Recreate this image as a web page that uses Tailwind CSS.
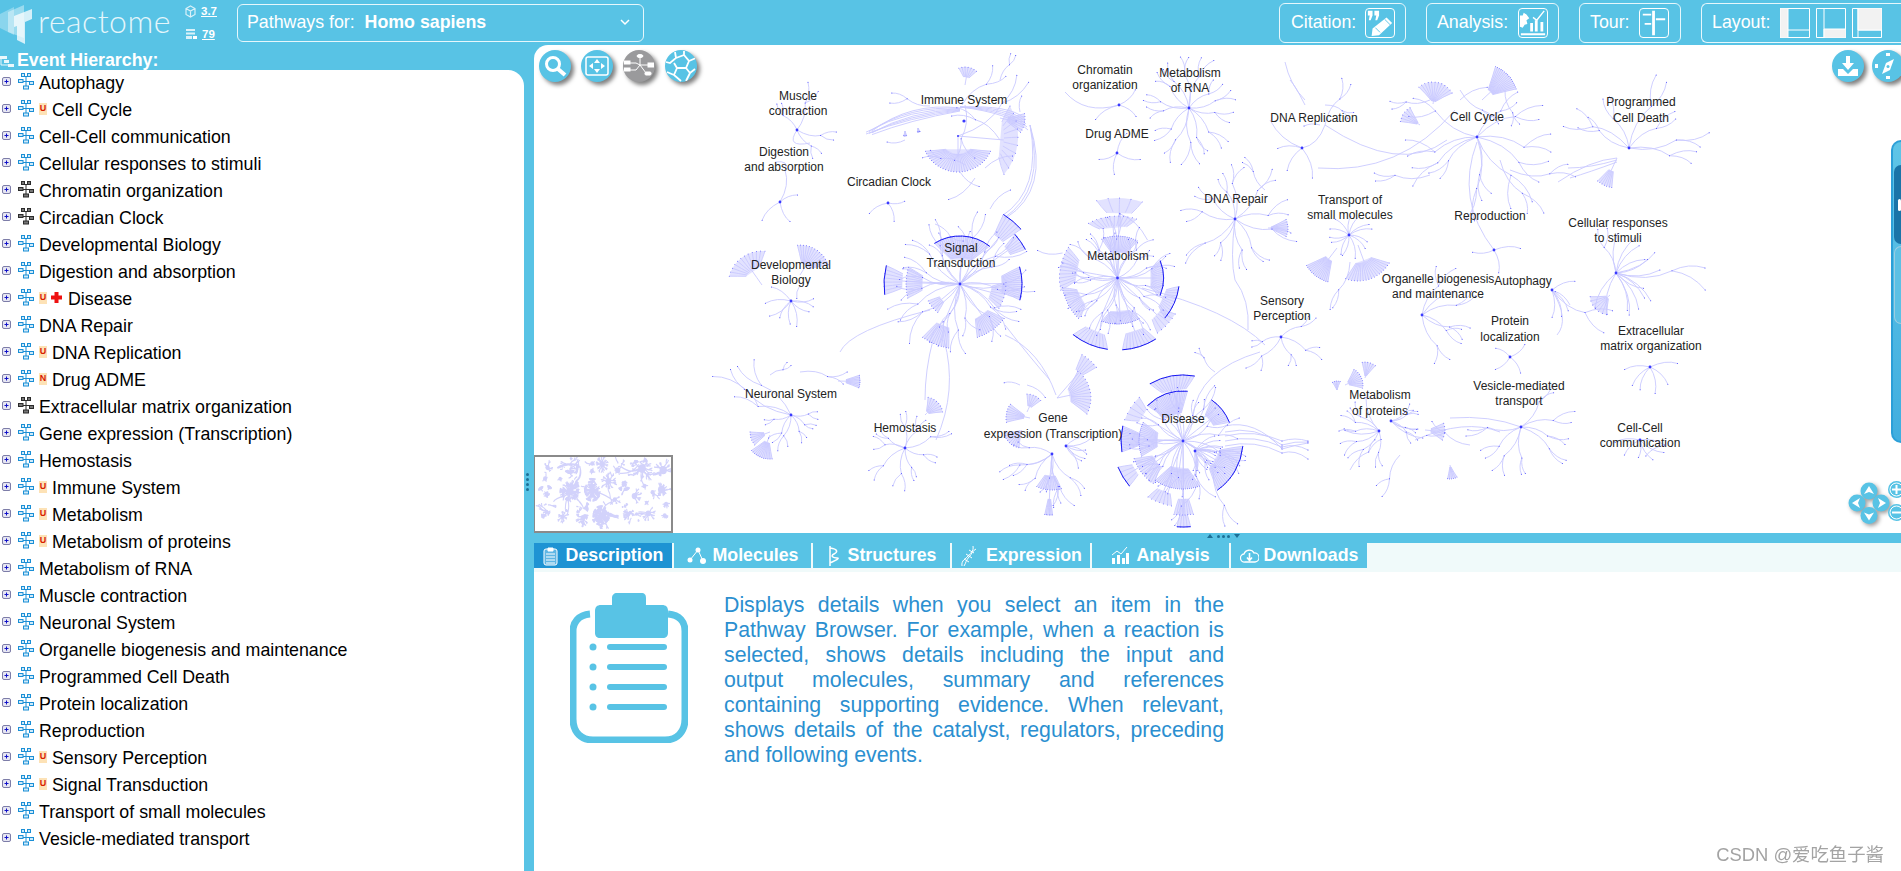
<!DOCTYPE html>
<html lang="en"><head><meta charset="utf-8"><title>Reactome Pathway Browser</title>
<script src="https://cdn.jsdelivr.net/npm/@tailwindcss/browser@4"></script></head>
<body class="h-[871px] w-[1901px] overflow-hidden bg-[#58c3e5] font-['Liberation_Sans',Arial,sans-serif] text-[17.8px]">
<header class="flex h-[45px] items-center text-white">
  <div class="relative flex h-[45px] w-[180px] shrink-0 items-center">
    <svg class="absolute left-0 top-[2px]" width="38" height="42" viewBox="0 0 38 42"><path d="M0 12 L14 5 V33 L0 26Z" fill="#fff" opacity=".3"/><path d="M8 10 L24 3 V36 L8 30Z" fill="#fff" opacity=".4"/><path d="M14 14 L32 7 V17 L25 20 V42 L17 38 V24 L14 25Z" fill="#fff" opacity=".75"/></svg>
    <span class="ml-[38px] mt-[-4px] font-['Lato',sans-serif] text-[32px] font-light tracking-[.5px] text-[#e4f6fb]">reactome</span>
  </div>
  <div class="flex w-[57px] shrink-0 flex-col gap-[7px] text-[11.5px] font-bold leading-[16px]">
    <div class="flex items-center gap-[5px] pl-[5px]"><svg width="11" height="13" viewBox="0 0 11 13" fill="none" stroke="#d9f1f9" stroke-width="1.2"><path d="M5.5 1 L10 3.5 V9.5 L5.5 12 L1 9.5 V3.5Z M1 3.5 L5.5 6 L10 3.5 M5.5 6 V12"/></svg><span class="underline">3.7</span></div>
    <div class="flex items-center gap-[5px] pl-[6px]"><svg width="11" height="12" viewBox="0 0 11 12"><path d="M0 1h9v2H0zM0 4.500h9v2H0zM0 8h6v3H0z" fill="#d9f1f9"/><path d="M7 8h4v3H7z" fill="#fff"/></svg><span class="underline">79</span></div>
  </div>
  <div class="flex h-[38px] w-[407px] shrink-0 items-center justify-between rounded-md border border-[#e6f7fc] pl-[9px] pr-[13px]">
    <span>Pathways for:&nbsp; <b>Homo sapiens</b></span>
    <svg width="10" height="7" viewBox="0 0 10 7" fill="none" stroke="#fff" stroke-width="1.500"><path d="M1 1 L5 5 L9 1"/></svg>
  </div>
  <div class="ml-auto flex h-[40px] items-center gap-[20px]">
    <div class="flex h-[40px] w-[127px] items-center justify-between rounded-md border border-[#e6f7fc] pl-[11px] pr-[10px]"><span>Citation:</span>
      <svg width="30" height="30" viewBox="0 0 30 30" class="rounded-sm border border-white"><path d="M2 2h5v5l-2 5H3l1-5H2zM9 2h5v5l-2 5h-2l1-5H9z" fill="#fff"/><path d="M22 9l6 6-14 13-8 1 1-8z" fill="#fff"/><path d="M10 20l5 5M20 11l6 6" stroke="#58c3e5"/></svg></div>
    <div class="flex h-[40px] w-[133px] items-center justify-between rounded-md border border-[#e6f7fc] pl-[10px] pr-[10px]"><span>Analysis:</span>
      <svg width="30" height="30" viewBox="0 0 30 30" class="rounded-sm border border-white"><path d="M1 7h3l1-3 3 2 3 4-3 2 1 4-3 1-2 3-3-1z" fill="#fff"/><path d="M12 24V15h3v9zM17 24V12h3v12zM23 24V14h3v10zM2 26h26v2H2z" fill="#fff"/><path d="M15 9l4 3 8-10" stroke="#fff" stroke-width="1.500" fill="none"/></svg></div>
    <div class="flex h-[40px] w-[102px] items-center justify-between rounded-md border border-[#e6f7fc] pl-[10px] pr-[11px]"><span>Tour:</span>
      <svg width="30" height="30" viewBox="0 0 30 30" class="rounded-sm border border-white"><path d="M13 2h3v26h-3z" fill="#fff"/><path d="M3 5h9v2H3zM17 10h10v2H17zM5 15h7v2H5z" fill="#fff"/></svg></div>
    <div class="flex h-[40px] w-[200px] shrink-0 items-center gap-[6px] rounded-l-md border border-r-0 border-[#e6f7fc] pl-[10px]"><span class="mr-[4px]">Layout:</span>
      <svg width="30" height="30" viewBox="0 0 30 30" fill="none" stroke="#fff"><path d="M.5.500h29v29H.5z"/><path d="M0 0h8v30H0z" fill="#f2f2f2"/><path d="M8 22h22"/></svg>
      <svg width="30" height="30" viewBox="0 0 30 30" fill="none" stroke="#fff"><path d="M.5.500h29v29H.5zM8 0v30"/><path d="M8 21h22v9H8z" fill="#f2f2f2"/></svg>
      <svg width="30" height="30" viewBox="0 0 30 30" fill="none" stroke="#fff"><path d="M.5.500h29v29H.5zM6 0v30M6 22h24"/><path d="M6 0h24v22H6z" fill="#f2f2f2"/></svg>
    </div>
  </div>
</header>
<div class="flex h-[826px]">
  <aside class="flex w-[524px] shrink-0 flex-col">
    <div class="flex h-[25px] items-end gap-[3px] font-bold leading-[20px] text-white">
      <svg class="mb-[2px]" width="14" height="13" viewBox="0 0 14 13" fill="#eaf8fc"><path d="M0 1h7v3H0zM4 5h5v3H4zM8 9h6v3H8z"/><path d="M1 4v6h7" stroke="#eaf8fc" fill="none"/></svg><span>Event Hierarchy:</span>
    </div>
    <div id="tree" class="flex-1 rounded-tr-[16px] bg-white leading-none text-black"></div>
  </aside>
  <div class="relative w-[10px] shrink-0"><div class="absolute left-[2px] top-[428px] flex flex-col gap-[2px]"><i class="h-[3px] w-[3px] rounded-full bg-[#1c6f96]"></i><i class="h-[3px] w-[3px] rounded-full bg-[#1c6f96]"></i><i class="h-[3px] w-[3px] rounded-full bg-[#1c6f96]"></i><i class="h-[3px] w-[3px] rounded-full bg-[#1c6f96]"></i></div></div>
  <main class="flex min-w-0 flex-1 flex-col">
    <section class="relative h-[488px] shrink-0 overflow-hidden rounded-tl-[14px] bg-white">
      <svg class="absolute left-0 top-0" width="1367" height="488" viewBox="534 45 1367 488" font-family="'Liberation Sans',Arial,sans-serif" font-size="12" fill="#222" text-anchor="middle">
        <g id="graph" fill="none"></g>
        <g>
<text x="798" y="100">Muscle</text><text x="798" y="115">contraction</text>
<text x="784" y="156">Digestion</text><text x="784" y="171">and absorption</text>
<text x="889" y="186">Circadian Clock</text>
<text x="964" y="104">Immune System</text>
<text x="1105" y="74">Chromatin</text><text x="1105" y="89">organization</text>
<text x="1190" y="77">Metabolism</text><text x="1190" y="92">of RNA</text>
<text x="1117" y="138">Drug ADME</text>
<text x="1314" y="122">DNA Replication</text>
<text x="1477" y="121">Cell Cycle</text>
<text x="1641" y="106">Programmed</text><text x="1641" y="122">Cell Death</text>
<text x="1236" y="203">DNA Repair</text>
<text x="1350" y="204">Transport of</text><text x="1350" y="219">small molecules</text>
<text x="1490" y="220">Reproduction</text>
<text x="1618" y="227">Cellular responses</text><text x="1618" y="242">to stimuli</text>
<text x="791" y="269">Developmental</text><text x="791" y="284">Biology</text>
<text x="961" y="252">Signal</text><text x="961" y="267">Transduction</text>
<text x="1118" y="260">Metabolism</text>
<text x="1438" y="283">Organelle biogenesis</text><text x="1438" y="298">and maintenance</text>
<text x="1523" y="285">Autophagy</text>
<text x="1282" y="305">Sensory</text><text x="1282" y="320">Perception</text>
<text x="1510" y="325">Protein</text><text x="1510" y="341">localization</text>
<text x="1651" y="335">Extracellular</text><text x="1651" y="350">matrix organization</text>
<text x="791" y="398">Neuronal System</text>
<text x="905" y="432">Hemostasis</text>
<text x="1053" y="422">Gene</text><text x="1053" y="438">expression (Transcription)</text>
<text x="1183" y="423">Disease</text>
<text x="1380" y="399">Metabolism</text><text x="1380" y="415">of proteins</text>
<text x="1519" y="390">Vesicle-mediated</text><text x="1519" y="405">transport</text>
<text x="1640" y="432">Cell-Cell</text><text x="1640" y="447">communication</text>
        </g>
      </svg>
      <div class="absolute left-[5px] top-[5px] flex gap-[10px]">
        <div class="flex h-[32px] w-[32px] items-center justify-center rounded-full bg-[#58c3e5] shadow-[3px_3px_4px_rgba(0,0,0,.5)]"><svg width="24" height="24" viewBox="0 0 24 24" fill="none" stroke="#fff"><circle cx="10" cy="10" r="6.500" stroke-width="3"/><path d="M15 15l7 6" stroke-width="4"/></svg></div>
        <div class="flex h-[32px] w-[32px] items-center justify-center rounded-full bg-[#58c3e5] shadow-[3px_3px_4px_rgba(0,0,0,.5)]"><svg width="24" height="20" viewBox="0 0 24 20"><rect x="1" y="1" width="22" height="18" rx="2" fill="none" stroke="#fff" stroke-width="1.500"/><path d="M12 3l3 4H9zM12 17l3-4H9zM4 10l4-3v6zM20 10l-4-3v6z" fill="#fff"/></svg></div>
        <div class="flex h-[32px] w-[32px] items-center justify-center rounded-full bg-[#9a9a9c] shadow-[3px_3px_4px_rgba(0,0,0,.5)]"><svg width="30" height="26" viewBox="0 0 30 26" fill="none" stroke="#fff"><path d="M6 10h6l4 2 -4 5H6M16 12V4M16 12h8M16 12l6 8"/><rect x="0" y="8" width="6" height="3" fill="#fff"/><rect x="0" y="15" width="6" height="3" fill="#fff"/><ellipse cx="16" cy="3" rx="3" ry="1.500" fill="#fff"/><rect x="24" y="10" width="6" height="4" fill="#fff"/><rect x="21" y="19" width="6" height="3" rx="1" fill="#fff"/></svg></div>
        <div class="flex h-[32px] w-[32px] items-center justify-center overflow-hidden rounded-full bg-[#58c3e5] shadow-[3px_3px_4px_rgba(0,0,0,.5)]"><svg width="32" height="32" viewBox="0 0 32 32" fill="none" stroke="#fff" stroke-width="1.800"><path d="M10 2l1 6-6 5-4-1M11 8l8-3 5 6-3 7-9 0-3-5M19 5l0-4M24 11l7-3M21 18l4 5-4 8M25 23l5-4M12 18l-3 7 7 6M9 25l-7-3"/></svg></div>
      </div>
      <div class="absolute right-[-3px] top-[5px] flex gap-[8px]">
        <div class="flex h-[32px] w-[32px] items-center justify-center rounded-full bg-[#58c3e5] shadow-[3px_3px_4px_rgba(0,0,0,.5)]"><svg width="24" height="24" viewBox="0 0 24 24" fill="#fff"><path d="M10 2h4v7h4l-6 7-6-7h4z"/><path d="M2 15h5l5 5 5-5h5v7H2z"/></svg></div>
        <div class="flex h-[32px] w-[32px] items-center justify-center rounded-full bg-[#58c3e5] shadow-[3px_3px_4px_rgba(0,0,0,.5)]"><svg width="26" height="26" viewBox="0 0 26 26" fill="#fff"><path d="M19 6l-4 11-8 4 4-11z"/><circle cx="13" cy="13.500" r="1.500" fill="#58c3e5"/><path d="M11 0h4v3h-4zM11 23h4v3h-4zM0 11h3v4H0z"/></svg></div>
      </div>
      <div class="absolute left-[-1px] top-[410px] h-[78px] w-[140px] border-2 border-[#8a8a8a] bg-white"><svg class="h-full w-full" id="thumb" viewBox="707 63 978 477" preserveAspectRatio="none" fill="none"></svg></div>
      <div class="absolute right-0 top-[95px] h-[303px] w-[10px] rounded-l-[10px] border-2 border-r-0 border-[#2b9fd8] bg-gradient-to-b from-[#5fc5e7] to-[#41aedf] pl-[1px] pt-[23px]"><div class="flex h-[79px] items-center rounded-l-[8px] bg-[#1a74a8]"><i class="ml-[4px] h-[12px] w-[4px] rounded-sm bg-white"></i></div><div class="mt-[2px] h-[78px] rounded-l-[8px] border border-r-0 border-[#9ccde2] bg-[#5cc0e4]"></div></div>
      <svg class="absolute left-[1313px] top-[436px] drop-shadow-[2px_2px_2px_rgba(0,0,0,.4)]" width="46" height="48" viewBox="0 0 46 48"><g fill="#58c3e5"><circle cx="22" cy="10" r="8.500"/><circle cx="10" cy="22" r="8.500"/><circle cx="34" cy="22" r="8.500"/><circle cx="22" cy="34.500" r="8.500"/></g><g fill="#fff"><path d="M22 5l5 8-5-2-5 2zM22 39.500l5-8-5 2-5-2zM5 22l8-5-2 5 2 5zM39 22l-8-5 2 5-2 5z"/></g></svg>
      <div class="absolute left-[1354px] top-[436px] flex flex-col gap-[6px]">
        <svg width="17" height="17" viewBox="0 0 17 17"><circle cx="8.500" cy="8.500" r="8.500" fill="#58c3e5"/><circle cx="8.500" cy="8.500" r="6.500" fill="none" stroke="#fff"/><path d="M8.500 4v9M4 8.500h9" stroke="#fff" stroke-width="2"/></svg>
        <svg width="17" height="17" viewBox="0 0 17 17"><circle cx="8.500" cy="8.500" r="8.500" fill="#58c3e5"/><circle cx="8.500" cy="8.500" r="6.500" fill="none" stroke="#fff"/><path d="M4 8.500h9" stroke="#fff" stroke-width="2"/></svg>
      </div>
    </section>
    <div class="relative h-[10px] shrink-0"><div class="absolute left-[673px] top-[1px] flex items-center gap-[2px]"><i class="h-0 w-0 border-x-[3px] border-b-[4px] border-x-transparent border-b-[#1c6f96]"></i><i class="ml-[2px] h-[3px] w-[3px] rounded-full bg-[#1c6f96]"></i><i class="h-[3px] w-[3px] rounded-full bg-[#1c6f96]"></i><i class="h-[3px] w-[3px] rounded-full bg-[#1c6f96]"></i><i class="ml-[2px] h-0 w-0 border-x-[3px] border-t-[4px] border-x-transparent border-t-[#1c6f96]"></i></div></div>
    <nav class="flex h-[29px] shrink-0 items-start gap-[2px] bg-[#f0fafa] text-[17.8px] font-bold leading-none text-white">
      <a class="flex h-[25px] w-[138px] items-center justify-center gap-[8px] bg-[#1e93d3]"><svg width="15" height="20" viewBox="0 0 15 20" fill="none" stroke="#fff"><rect x="1" y="3" width="13" height="16" rx="2" fill="#5fb6e4"/><path d="M5 2h5v3H5z" fill="#fff"/><path d="M3 8h9M3 11h9M3 14h9M3 17h9"/></svg>Description</a>
      <a class="flex h-[25px] w-[137px] items-center justify-center gap-[6px] bg-[#58c3e5]"><svg width="20" height="18" viewBox="0 0 20 18" fill="#fff"><circle cx="3" cy="13" r="2.500"/><circle cx="11" cy="3" r="2.500"/><circle cx="16" cy="14" r="3"/><path d="M3 13l8-10 5 11" stroke="#fff" fill="none"/></svg>Molecules</a>
      <a class="flex h-[25px] w-[137px] items-center justify-center gap-[9px] bg-[#58c3e5]"><svg width="12" height="22" viewBox="0 0 12 22" fill="none" stroke="#fff" stroke-width="1.500"><path d="M3 1v20M3 3c8 1 8 4 4 6s-1 4 3 4-3 3-7 5"/></svg>Structures</a>
      <a class="flex h-[25px] w-[138px] items-center justify-center gap-[9px] bg-[#58c3e5]"><svg width="17" height="22" viewBox="0 0 17 22" fill="none" stroke="#fff"><path d="M13 1c1 6-3 7-5 10S1 15 2 21M16 4C12 6 12 9 9 12S6 18 4 21M9 5l5 3M6 9l6 4M4 14l5 3" /></svg>Expression</a>
      <a class="flex h-[25px] w-[137px] items-center justify-center gap-[7px] bg-[#58c3e5]"><svg width="18" height="20" viewBox="0 0 18 20" fill="#fff"><path d="M1 18v-6h3v6zM6 18V9h3v9zM11 18v-6h3v6zM15 18V7h3v11z"/><path d="M1 9l5-4 4 3 6-7" stroke="#fff" fill="none"/></svg>Analysis</a>
      <a class="flex h-[25px] w-[136px] items-center justify-center gap-[5px] bg-[#58c3e5]"><svg width="19" height="16" viewBox="0 0 19 16" fill="none" stroke="#fff" stroke-width="1.300"><path d="M5 14a4 4 0 0 1-1-8 5.500 5.500 0 0 1 10-1 4.500 4.500 0 0 1 1 9z"/><path d="M9.500 5v7M7 9.500l2.500 3 2.500-3" stroke-width="1.600"/></svg>Downloads</a>
    </nav>
    <section class="flex flex-1 items-start bg-white pl-[36px] pt-[21px]">
      <svg class="shrink-0" width="118" height="150" viewBox="0 0 118 150"><path d="M20 21C8 22 3 30 3 38v88c0 14 9 21 20 21h72c12 0 20-8 20-21V38c0-9-5-16-17-17" fill="none" stroke="#58c3e5" stroke-width="7"/><path d="M47 0h24c4 0 5 2 5 5v7h16c4 0 6 2 6 6v22c0 3-2 5-5 5H30c-3 0-5-2-5-5V18c0-4 2-6 6-6h11V5c0-3 2-5 5-5z" fill="#58c3e5"/><g fill="#58c3e5"><circle cx="23" cy="54" r="3.500"/><circle cx="23" cy="74" r="3.500"/><circle cx="23" cy="94" r="3.500"/><circle cx="23" cy="114" r="3.500"/><rect x="37" y="51" width="60" height="6" rx="3"/><rect x="37" y="71" width="60" height="6" rx="3"/><rect x="37" y="91" width="60" height="6" rx="3"/><rect x="37" y="111" width="60" height="6" rx="3"/></g></svg>
      <p class="ml-[36px] w-[500px] text-justify text-[21.3px] leading-[25px] text-[#2b8fd0]">Displays details when you select an item in the Pathway Browser. For example, when a reaction is selected, shows details including the input and output molecules, summary and references containing supporting evidence. When relevant, shows details of the catalyst, regulators, preceding and following events.</p>
    </section>
  </main>
</div>
<div class="fixed bottom-[6px] right-[17px] font-['Liberation_Sans','Noto_Sans_CJK_SC',sans-serif] text-[18.4px] leading-5 text-[#a3a3a3]">CSDN @爱吃鱼子酱</div>
<script>
var rows=[["Autophagy"],["Cell Cycle","U"],["Cell-Cell communication"],["Cellular responses to stimuli"],["Chromatin organization",0,1],["Circadian Clock",0,1],["Developmental Biology"],["Digestion and absorption"],["Disease","U","+"],["DNA Repair"],["DNA Replication","U"],["Drug ADME","N"],["Extracellular matrix organization",0,1],["Gene expression (Transcription)"],["Hemostasis"],["Immune System","U"],["Metabolism","U"],["Metabolism of proteins","U"],["Metabolism of RNA"],["Muscle contraction"],["Neuronal System"],["Organelle biogenesis and maintenance"],["Programmed Cell Death"],["Protein localization"],["Reproduction"],["Sensory Perception","U"],["Signal Transduction","U"],["Transport of small molecules"],["Vesicle-mediated transport"]];
var h='';
rows.forEach(function(r){
 var c=r[2]===1?'#2b2b2b':'#1b8fd6',f=r[2]===1?'#777':'#cfeaf9';
 h+='<div style="display:flex;align-items:center;height:27px;white-space:nowrap">'
 +'<svg width="10" height="10" viewBox="0 0 10 10" style="margin-left:2px;margin-top:-4px;flex:none"><rect x=".5" y=".5" width="8" height="8" rx="1.500" fill="#e6e6f2" stroke="#7d7da8"/><path d="M2.500 4.500h4M4.500 2.500v4" stroke="#1010c8"/></svg>'
 +'<svg width="16" height="17" viewBox="0 0 16 17" style="margin-left:6px;margin-top:-4px;flex:none" fill="none" stroke="'+c+'"><path d="M8 3v10M3 8.500h10" stroke-width="1"/><path d="M4 3.500h8" stroke-width="1"/><rect x="3.500" y=".5" width="3" height="3" fill="'+f+'"/><rect x="9.500" y=".5" width="3" height="3" fill="'+f+'"/><rect x=".5" y="6.500" width="4.500" height="3" fill="'+f+'"/><rect x="11.500" y="8.500" width="4" height="3" fill="'+f+'"/><rect x="5.500" y="13" width="5" height="3" fill="'+f+'"/></svg>';
 if(r[1])h+='<span style="margin-left:5px;margin-top:-3px;width:8px;height:12px;background:#fde2b6;color:#d81c00;font-size:9px;font-weight:bold;line-height:11px;text-align:center;flex:none">'+r[1]+'</span>';
 if(r[2]==='+')h+='<svg width="11" height="11" viewBox="0 0 11 11" style="margin-left:4px;margin-top:-4px;flex:none"><path d="M3.500 0h4v3.500H11v4H7.500V11h-4V7.500H0v-4h3.500z" fill="#ee1111"/></svg>';
 h+='<span style="margin-left:'+(r[2]==='+'?6:5)+'px">'+r[0]+'</span></div>';
});
document.getElementById('tree').innerHTML=h;

var seed=12345;function R(){seed=(seed*1664525+1013904223)>>>0;return seed/4294967296;}
var L='',F='',A='',D=[],B=[];
function dot(x,y,s){D.push([x,y,s||.5]);}
function P(x1,y1,cx,cy,x2,y2){L+='M'+x1.toFixed(1)+' '+y1.toFixed(1)+'Q'+cx.toFixed(1)+' '+cy.toFixed(1)+' '+x2.toFixed(1)+' '+y2.toFixed(1);}
function rad(d){return d*Math.PI/180;}
function pol(x,y,a,r){return [x+Math.cos(a)*r,y+Math.sin(a)*r];}
function spoke(x,y,a,len,depth){
 var jit=(R()-.5)*.5,e=pol(x,y,a+jit,len),side=R()<.5?-1:1,m=pol(x,y,a+jit,len*.55),c=pol(m[0],m[1],a+Math.PI/2*side,len*.2);
 P(x,y,c[0],c[1],e[0],e[1]);dot(e[0],e[1]);
 if(depth>0){var n=depth>1?3:2;for(var i=0;i<n;i++){spoke(e[0],e[1],a+(i-(n-1)/2)*.55+side*.1,len*(.5+R()*.25),depth-1);}}
}
function cl(x,y,r,n,d,a0,a1){a0=a0==null?0:a0;a1=a1==null?360:a1;for(var i=0;i<n;i++){var t=a0+(a1-a0)*(i+.5)/n;spoke(x,y,rad(t),r*(.55+R()*.3),d);}dot(x,y,1.4);B.push([x,y,r*.55]);}
function fan(x,y,a0,a1,r0,r1,n,dark){
 var am=rad((a0+a1)/2),k=.65,ia=rad(a0),ib=rad(a1);
 for(var i=0;i<n;i++){var t=rad(a0+(a1-a0)*i/(n-1||1)),s=pol(x,y,am+(t-am)*k,r0),e=pol(x,y,t,r1),c=pol(x,y,am+(t-am)*.9,r0+(r1-r0)*.55);P(s[0],s[1],c[0],c[1],e[0],e[1]);dot(e[0],e[1],.45);}
 var a=pol(x,y,ia,r1),b=pol(x,y,ib,r1),s1=pol(x,y,am+(ia-am)*k,r0),s2=pol(x,y,am+(ib-am)*k,r0);
 F+='<path d="M'+s1[0].toFixed(1)+' '+s1[1].toFixed(1)+'L'+a[0].toFixed(1)+' '+a[1].toFixed(1)+'A'+r1+' '+r1+' 0 0 1 '+b[0].toFixed(1)+' '+b[1].toFixed(1)+'L'+s2[0].toFixed(1)+' '+s2[1].toFixed(1)+'Z"/>';
 if(dark)A+='M'+a[0].toFixed(1)+' '+a[1].toFixed(1)+'A'+r1+' '+r1+' 0 0 1 '+b[0].toFixed(1)+' '+b[1].toFixed(1);
 var st=pol(x,y,am,r0*.5),s0=pol(x,y,am,r0);P(x,y,st[0],st[1],s0[0],s0[1]);
}
/* small clusters */
cl(797,130,36,4,1,-150,90);P(797,130,785,148,810,143);
cl(780,202,34,3,0,-70,170);P(780,202,790,185,785,170);P(785,170,790,160,775,162);
cl(888,203,28,3,0,-60,190);
cl(1117,153,32,4,0,-90,190);
cl(1119,105,34,3,0,-100,190);P(1119,105,1085,115,1065,92);
cl(1189,108,42,14,1);
cl(791,301,34,9,0,-30,220);fan(762,285,-165,-85,18,34,12);fan(800,275,-95,-20,12,30,14);spoke(800,285,-80,14,0);
cl(1235,219,46,11,1);fan(1268,228,-25,25,3,20,8);spoke(1265,190,-40,22,1);P(1235,219,1230,260,1235,280);P(1235,280,1250,300,1248,330);
/* signal */
var sx=960,sy=284;cl(sx,sy,56,22,1);
fan(sx,sy,-122,-52,26,48,26,1);fan(sx,sy,-58,-42,60,82,7,1);fan(sx,sy,-42,-28,58,74,7,1);fan(sx,sy,-16,15,42,62,16,1);
fan(sx,sy,172,194,58,76,8,1);fan(sx,sy,165,198,38,54,12);fan(sx,sy,38,72,38,56,14);fan(sx,sy,-2,32,32,46,8);fan(sx,sy,100,125,45,65,12);fan(sx,sy,128,152,24,36,6);
spoke(sx+30,sy-75,-70,28,0);spoke(sx-25,sy-60,-100,20,1);
/* metabolism */
var mx=1117.5,my=278;cl(mx,my,46,24,1);
fan(mx,my,-112,-62,26,42,18);fan(mx,my,-118,-72,52,62,12);fan(mx,my,-105,-72,66,80,5);fan(mx,my,168,212,42,58,12);
fan(mx,my,-22,22,34,46,16,1);fan(mx,my,8,40,50,62,12,1);fan(mx,my,62,110,34,46,22);fan(mx,my,98,128,58,72,10,1);fan(mx,my,58,86,56,72,10,1);fan(mx,my,134,170,42,56,14);fan(mx,my,32,54,54,68,6);
spoke(mx+30,my-38,-15,38,0);spoke(mx-55,my-25,-160,25,0);
/* immune */
var ix=964,iy=121;dot(ix,iy,1.6);dot(958,136,1);
for(var i=0;i<7;i++){P(ix-4,108+i*.5,910,102+i*3,872-(i%3)*3,131+i*.6);}
for(var i=0;i<5;i++){P(ix-4,107,1010,105+i*2,1024+i,118+i*3);}
fan(958,136,25,155,18,36,30);fan(958,136,-30,40,46,60,10);fan(1000,118,-10,35,8,25,8);
fan(905,131,70,105,0,5,4);fan(918,128,60,100,0,4,5);
spoke(958,136,150,55,1);spoke(962,105,-95,32,1);spoke(965,105,-55,34,1);spoke(930,106,-135,24,1);spoke(905,140,160,18,0);spoke(1000,140,35,32,1);spoke(985,168,75,30,0);spoke(965,165,85,25,1);spoke(960,172,95,24,0);
spoke(1000,80,-45,18,1);fan(965,85,-110,-50,8,18,7);spoke(1020,112,5,16,0);P(1030,125,1050,190,1006,218);P(1030,125,1046,190,1004,218);P(1030,125,1042,190,1002,216);spoke(975,178,78,34,0);
/* cell cycle */
var cx=1477,cy=137;cl(cx,cy,62,11,1,-50,210);
fan(1433,104,-130,-30,3,22,12);fan(1482,100,-68,-18,12,36,16);fan(1420,125,-170,-120,3,20,6);spoke(1430,100,-110,24,1);spoke(1460,90,-100,30,1);spoke(1505,90,-30,24,1);spoke(1460,100,-120,30,0);
spoke(1510,170,25,40,1);spoke(1500,160,45,40,1);spoke(1430,175,135,35,1);
P(1318,168,1400,175,1455,110);P(1325,125,1400,175,1447,140);P(cx,cy+5,1455,200,1494,250);
/* DNA rep */
cl(1302,148,42,3,0,60,200);P(1302,148,1280,140,1270,120);P(1302,148,1318,145,1325,125);spoke(1325,125,-70,30,1);spoke(1320,125,-110,16,0);P(1305,100,1290,85,1285,62);P(1305,105,1295,85,1290,80);spoke(1325,105,-100,18,1);
/* programmed */
cl(1629,148,60,5,1,-170,40);fan(1617,158,100,130,14,30,7);P(1617,158,1590,160,1558,182);P(1617,160,1590,168,1568,168);P(1617,162,1590,172,1570,178);spoke(1629,148,60,42,1);spoke(1629,148,25,48,1);
/* transport */
var tx=1349,ty=235;cl(tx,ty,34,13,0);fan(1337,248,105,150,14,35,14);fan(1358,245,30,110,18,36,18);spoke(1350,262,90,30,1);
/* small */
cl(1494,250,32,3,0,-30,200);
cl(1616,273,56,15,0,-90,120);spoke(1616,273,130,28,1);spoke(1616,273,-88,56,1);fan(1610,295,100,175,4,20,7);
cl(1552,290,32,3,0,-40,130);spoke(1552,290,170,40,1);spoke(1552,290,-30,28,0);spoke(1570,305,10,20,0);P(1552,290,1570,320,1557,335);
cl(1422,315,45,4,1,-90,90);spoke(1422,315,170,30,1);spoke(1422,315,100,40,0);
cl(1510,357,26,4,0);
cl(1650,367,34,6,0,-10,190);
/* sensory */
cl(1281,337,34,5,1,-60,200);
/* neuronal */
cl(791,415,28,6,1,-20,180);spoke(791,415,-40,42,1);spoke(791,415,-15,50,1);spoke(791,415,35,34,1);fan(770,435,85,140,8,24,12);fan(770,432,140,180,6,20,6);fan(838,381,-15,18,8,22,8);spoke(800,372,-50,28,1);spoke(770,375,-120,14,1);
/* hemostasis */
cl(905,448,34,9,1,0,360);fan(925,415,-80,-10,4,18,8);
/* gene */
cl(1052,454,40,8,1,40,200);cl(1066,446,34,7,0,-40,80);fan(1057,398,-52,28,14,34,14);fan(1057,398,-60,-38,34,50,6);fan(1027,412,-90,-40,6,18,6);fan(1030,418,170,215,6,24,8);fan(1022,430,100,170,2,18,9);fan(1052,454,75,115,22,36,12);fan(1050,485,85,100,14,30,6);spoke(1020,385,-110,16,0);spoke(1027,385,-100,22,0);
/* disease */
var dx=1183,dy=441;cl(dx,dy,46,22,1);cl(1195,451,34,18,0,-30,100);
fan(dx,dy,-135,-85,28,50,24,1);fan(dx,dy,-120,-80,52,66,14,1);fan(dx,dy,-160,-135,48,62,5);fan(dx,dy,-55,-22,34,50,14,1);
fan(dx,dy,170,194,44,62,16,1);fan(dx,dy,160,205,26,44,18);fan(dx,dy,70,125,28,48,24);fan(dx,dy,125,160,34,52,12);fan(dx,dy,5,55,38,60,22,1);fan(dx,dy,82,97,58,74,8);fan(dx,dy,85,94,74,86,5,1);fan(dx,dy,140,158,56,70,5,1);fan(dx,dy,100,122,54,66,7);
spoke(dx+30,dy+30,45,36,1);spoke(dx+15,dy+40,65,30,1);
[[-12,8],[-6,4],[-2,0],[3,6],[8,12]].forEach(function(p,i){P(1225,dy+p[0]-3,1255,dy+p[0]-10,1282,dy+p[1]);P(1282,dy+p[1],1295,dy+p[1]-4,1308,dy+p[1]+(i-2)*3);dot(1308,dy+p[1]+(i-2)*3);dot(1282,dy+p[1]);});
P(dx+10,dy-25,1198,370,1260,352);spoke(1215,372,-40,18,1);
/* met proteins */
cl(1379,431,32,6,1,90,240);cl(1391,421,28,4,1,-60,60);fan(1345,385,-60,10,4,18,10);fan(1365,378,-100,-50,2,16,6);fan(1337,390,-120,-70,0,9,5);fan(1425,430,-20,30,6,20,6);
spoke(1379,431,-90,36,0);spoke(1379,431,-110,34,0);spoke(1391,421,-75,36,0);spoke(1391,421,-100,28,0);
spoke(1400,455,65,26,1);spoke(1350,470,150,26,1);
/* vesicle */
cl(1521,427,42,8,1,-60,190);fan(1450,465,60,100,2,14,6);spoke(1470,445,60,28,1);P(1415,440,1465,418,1500,432);P(1521,427,1490,415,1450,418);
/* cell-cell */
cl(1640,440,32,6,0,-10,180);spoke(1665,445,-10,22,0);
/* links */
P(925,400,925,370,933,340);P(936,440,958,390,944,340);P(1056,395,1040,350,1005,335);P(930,310,850,330,840,352);P(1005,325,1032,360,1050,380);P(1142,288,1230,310,1265,345);
var paths='<path d="'+L+'" stroke="#c9c9ff" stroke-width=".9"/>';
var dots='';D.forEach(function(d){dots+='<circle cx="'+d[0].toFixed(1)+'" cy="'+d[1].toFixed(1)+'" r="'+d[2]+'" fill="#3a3aff"/>';});
document.getElementById('graph').innerHTML='<g fill="#d6d6ff" fill-opacity=".7">'+F+'</g>'+paths+'<path d="'+A+'" stroke="#1414f0" stroke-width="1"/>'+dots;
var blobs='';B.forEach(function(b){blobs+='<circle cx="'+b[0]+'" cy="'+b[1]+'" r="'+(b[2]*.8).toFixed(1)+'"/>';});
document.getElementById('thumb').innerHTML='<g fill="#d2d2fb">'+F+blobs+'</g><path d="'+L+'" stroke="#d2d2fb" stroke-width="8"/>';
</script>
</body></html>
